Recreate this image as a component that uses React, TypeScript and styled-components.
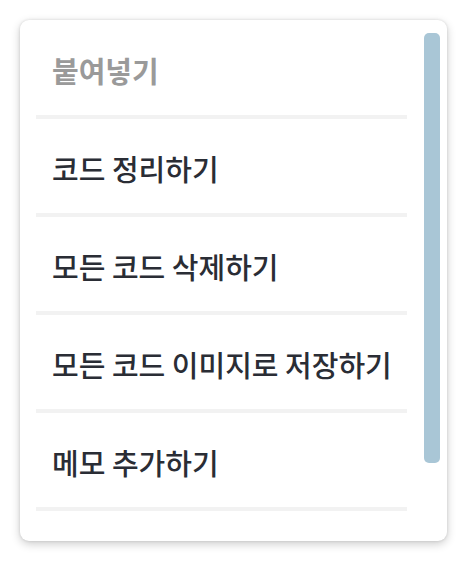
import React from "react";
import styled, { createGlobalStyle } from "styled-components";

const Global = createGlobalStyle`
  html, body { margin: 0; padding: 0; background: #ffffff; }
  body { font-family: "Noto Sans CJK KR", "Noto Sans", sans-serif; }
`;

const Page = styled.div`
  padding: 20px 22px 21px 20px;
`;

const Card = styled.div`
  width: 427px;
  height: 521px;
  box-sizing: border-box;
  background: #ffffff;
  border-radius: 9px;
  box-shadow: 0 3px 10px rgba(0, 0, 0, 0.2), 0 0 3px rgba(0, 0, 0, 0.12);
  display: flex;
  padding: 1px 7px 0 16px;
  overflow: hidden;
`;

const List = styled.ul`
  flex: 1;
  list-style: none;
  margin: 0;
  padding: 0;
  overflow: hidden;
`;

const Item = styled.li<{ $muted?: boolean }>`
  box-sizing: border-box;
  height: 98px;
  padding: 4px 16px 0;
  border-bottom: 4px solid #f2f2f2;
  display: flex;
  align-items: center;
  font-size: 29px;
  font-weight: ${(p) => (p.$muted ? 700 : 500)};
  color: ${(p) => (p.$muted ? "#9a9a9a" : "#2a2d35")};
  white-space: nowrap;
`;

const Track = styled.div`
  width: 16px;
  padding: 12px 0 0 17px;
`;

const Thumb = styled.div`
  width: 16px;
  height: 430px;
  border-radius: 5px;
  background: #a9c6d6;
`;

const items = [
  "붙여넣기",
  "코드 정리하기",
  "모든 코드 삭제하기",
  "모든 코드 이미지로 저장하기",
  "메모 추가하기",
];

export default function App() {
  return (
    <>
      <Global />
      <Page>
        <Card>
          <List>
            {items.map((t, i) => (
              <Item key={t} $muted={i === 0}>
                {t}
              </Item>
            ))}
          </List>
          <Track>
            <Thumb />
          </Track>
        </Card>
      </Page>
    </>
  );
}
